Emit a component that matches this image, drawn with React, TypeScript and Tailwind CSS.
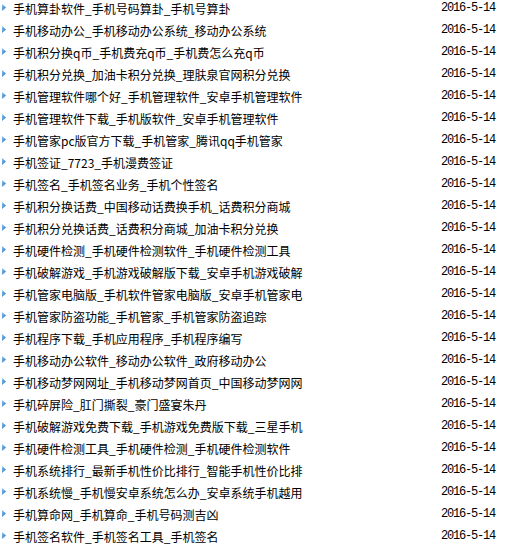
const items = [
  "手机算卦软件_手机号码算卦_手机号算卦",
  "手机移动办公_手机移动办公系统_移动办公系统",
  "手机积分换q币_手机费充q币_手机费怎么充q币",
  "手机积分兑换_加油卡积分兑换_理肤泉官网积分兑换",
  "手机管理软件哪个好_手机管理软件_安卓手机管理软件",
  "手机管理软件下载_手机版软件_安卓手机管理软件",
  "手机管家pc版官方下载_手机管家_腾讯qq手机管家",
  "手机签证_7723_手机漫费签证",
  "手机签名_手机签名业务_手机个性签名",
  "手机积分换话费_中国移动话费换手机_话费积分商城",
  "手机积分兑换话费_话费积分商城_加油卡积分兑换",
  "手机硬件检测_手机硬件检测软件_手机硬件检测工具",
  "手机破解游戏_手机游戏破解版下载_安卓手机游戏破解",
  "手机管家电脑版_手机软件管家电脑版_安卓手机管家电",
  "手机管家防盗功能_手机管家_手机管家防盗追踪",
  "手机程序下载_手机应用程序_手机程序编写",
  "手机移动办公软件_移动办公软件_政府移动办公",
  "手机移动梦网网址_手机移动梦网首页_中国移动梦网网",
  "手机碎屏险_肛门撕裂_豪门盛宴朱丹",
  "手机破解游戏免费下载_手机游戏免费版下载_三星手机",
  "手机硬件检测工具_手机硬件检测_手机硬件检测软件",
  "手机系统排行_最新手机性价比排行_智能手机性价比排",
  "手机系统慢_手机慢安卓系统怎么办_安卓系统手机越用",
  "手机算命网_手机算命_手机号码测吉凶",
  "手机签名软件_手机签名工具_手机签名",
];

function Bullet() {
  return (
    <svg width="6" height="9" viewBox="0 0 6 9" className="mt-[3px] ml-[1px] shrink-0">
      <defs>
        <linearGradient id="tri" x1="0" y1="0" x2="1" y2="1">
          <stop offset="0" stopColor="#8cc6f0" />
          <stop offset="1" stopColor="#1f6cc0" />
        </linearGradient>
      </defs>
      <polygon points="1,1 5,4.5 1,8" fill="url(#tri)" />
    </svg>
  );
}

export default function App() {
  return (
    <div className="w-[532px] h-[549px] bg-white overflow-hidden">
      <ul>
        {items.map((title, i) => (
          <li key={i} className="flex items-start h-[22px]">
            <Bullet />
            <span
              className="ml-[6px] w-[428px] text-[12px] leading-[17px] text-black whitespace-nowrap overflow-hidden"
              style={{ fontFamily: '"Noto Sans CJK SC", "Liberation Sans", sans-serif' }}
            >
              {title}
            </span>
            <span
              className="text-[12px] leading-[17px] text-black tracking-[-1.2px] whitespace-nowrap"
              style={{ fontFamily: '"Liberation Mono", monospace' }}
            >
              2016-5-14
            </span>
          </li>
        ))}
      </ul>
    </div>
  );
}
